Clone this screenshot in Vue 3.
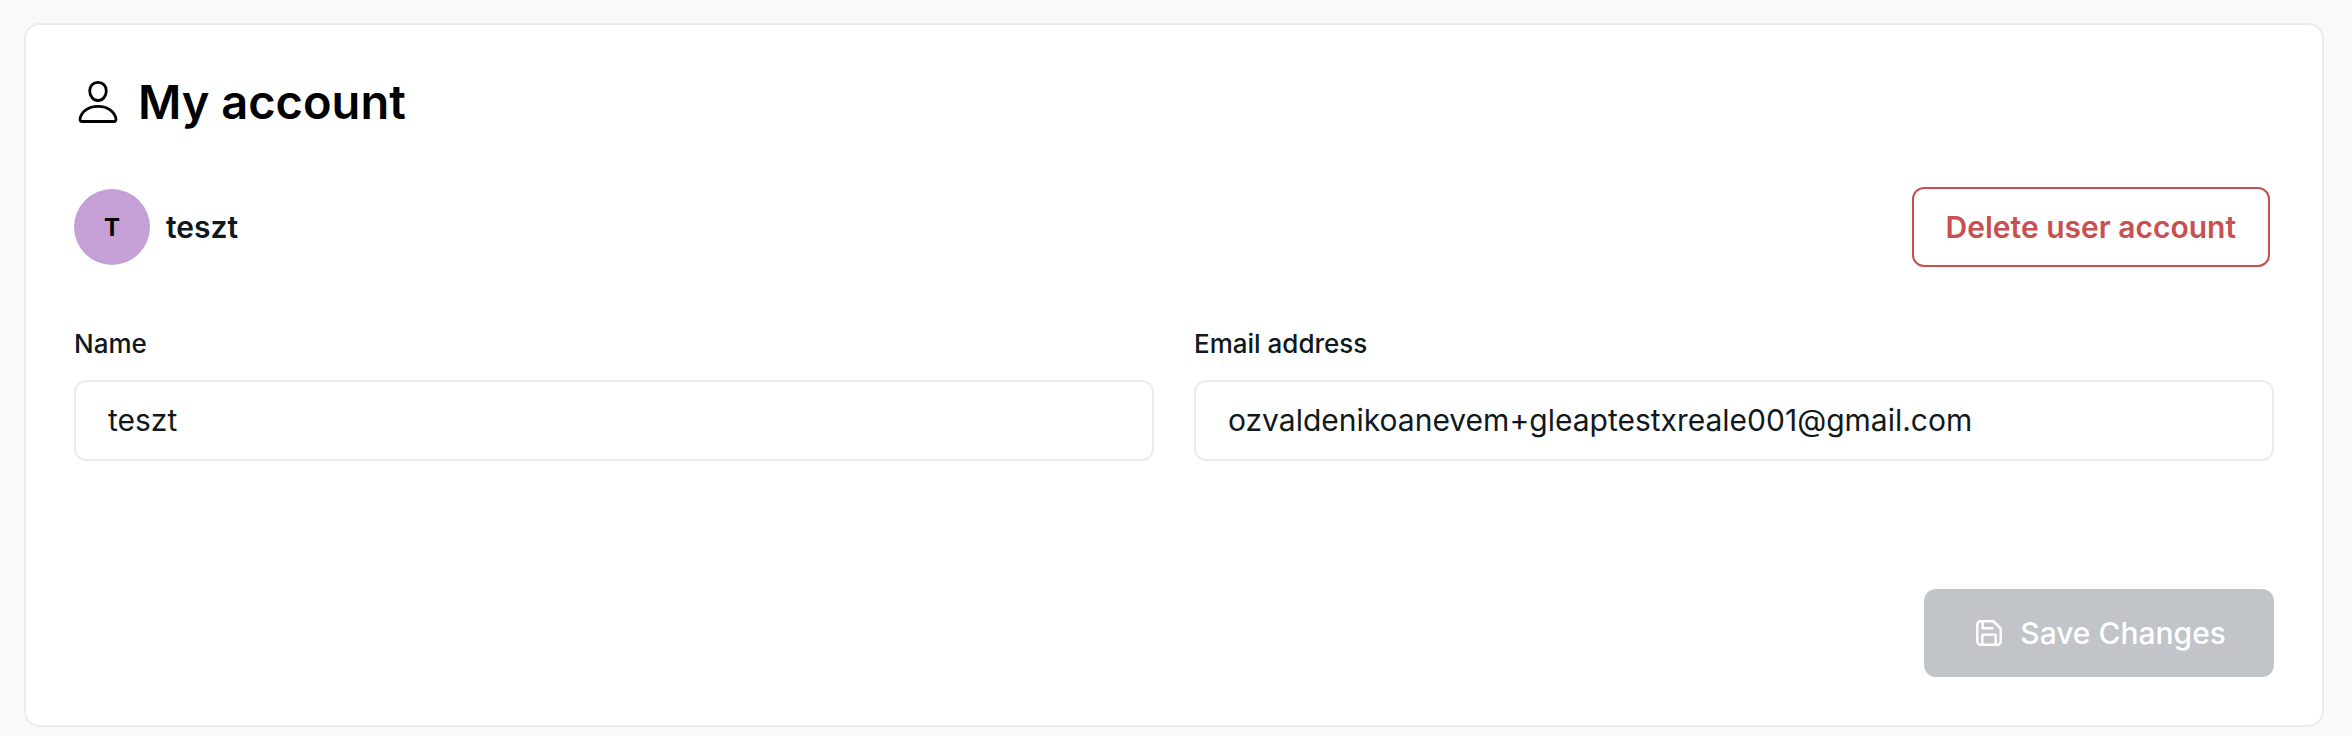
<script setup>
import { ref } from 'vue'

const name = ref('teszt')
const email = ref('ozvaldenikoanevem+gleaptestxreale001@gmail.com')
</script>

<template>
  <main class="page">
    <form class="card" @submit.prevent>
      <h1 class="title">
        <svg class="title-icon" viewBox="0 0 48 48" aria-hidden="true">
          <path d="M24 4.400c5 0 8.300 3.600 8.300 8.600 0 5.300-3.700 9.500-8.300 9.500s-8.300-4.200-8.300-9.500c0-5 3.300-8.600 8.300-8.600z" />
          <path d="M24 28.400c10.300 0 16.800 5.700 17.900 12.200.3 2-.5 2.900-2.100 2.900H8.200c-1.600 0-2.400-.9-2.100-2.900C7.200 34.100 13.700 28.400 24 28.400z" />
        </svg>
        My account
      </h1>

      <div class="profile">
        <span class="avatar">T</span>
        <span class="profile-name">{{ name }}</span>
        <button class="delete" type="button">Delete user account</button>
      </div>

      <div class="fields">
        <div class="field">
          <label for="name">Name</label>
          <input id="name" v-model="name" type="text" />
        </div>
        <div class="field">
          <label for="email">Email address</label>
          <input id="email" v-model="email" type="email" />
        </div>
      </div>

      <div class="actions">
        <button class="save" type="submit" disabled>
          <svg class="save-icon" viewBox="0 0 26 26" aria-hidden="true">
            <path d="M5 1.300H17.500L24.700 8.500V21.400a3.300 3.300 0 0 1-3.300 3.300H4.600a3.300 3.300 0 0 1-3.300-3.300V4.600A3.300 3.300 0 0 1 4.600 1.300z" />
            <path d="M6.600 1.500V8.200H17.500M6.300 24.500V15.600a1 1 0 0 1 1-1H18.700a1 1 0 0 1 1 1V24.500" />
          </svg>
          Save Changes
        </button>
      </div>
    </form>
  </main>
</template>

<style>
body {
  margin: 0;
  background: #f9f9f9;
}
</style>

<style scoped>
.page {
  padding: 23px 28px 9px 24px;
  color: #101820;
  font-family: Inter, "Liberation Sans", sans-serif;
  font-size: 30px;
}

.card {
  display: flex;
  flex-direction: column;
  padding: 48px;
  border: 2px solid #ebebeb;
  border-radius: 16px;
  background: #fff;
}

.title {
  display: flex;
  align-items: center;
  gap: 16px;
  margin: 0;
  color: #000;
  font-size: 47px;
  font-weight: 600;
  line-height: 58px;
}

.title-icon {
  width: 48px;
  height: 48px;
  fill: none;
  stroke: #000;
  stroke-width: 2.8;
}

.profile {
  display: flex;
  align-items: center;
  gap: 16px;
  margin-top: 56px;
  padding-right: 4px;
}

.avatar {
  display: flex;
  align-items: center;
  justify-content: center;
  width: 76px;
  height: 76px;
  border-radius: 50%;
  background: #c5a0d6;
  color: #000;
  font-size: 24px;
  font-weight: 700;
}

.profile-name {
  font-weight: 600;
}

button,
input {
  box-sizing: border-box;
  border-radius: 12px;
  font: inherit;
}

.delete {
  height: 80px;
  margin-left: auto;
  padding: 0 32px;
  border: 2px solid #c75050;
  background: #fff;
  color: #c75050;
  font-weight: 600;
}

.fields {
  display: grid;
  grid-template-columns: 1fr 1fr;
  gap: 40px;
  margin-top: 60px;
}

.field {
  display: flex;
  flex-direction: column;
  gap: 19px;
}

label {
  font-size: 26px;
  font-weight: 500;
  line-height: 34px;
}

input {
  width: 100%;
  height: 81px;
  padding: 0 32px 2px;
  border: 2px solid #ebebeb;
  background: #fff;
  color: inherit;
}

.actions {
  display: flex;
  justify-content: flex-end;
  margin-top: 128px;
}

.save {
  display: flex;
  align-items: center;
  gap: 18px;
  height: 88px;
  padding: 0 48px 0 52px;
  border: 0;
  background: #c1c4c9;
  color: #fff;
  font-weight: 500;
}

.save-icon {
  width: 26px;
  height: 26px;
  fill: none;
  stroke: #fff;
  stroke-width: 2.4;
}
</style>
